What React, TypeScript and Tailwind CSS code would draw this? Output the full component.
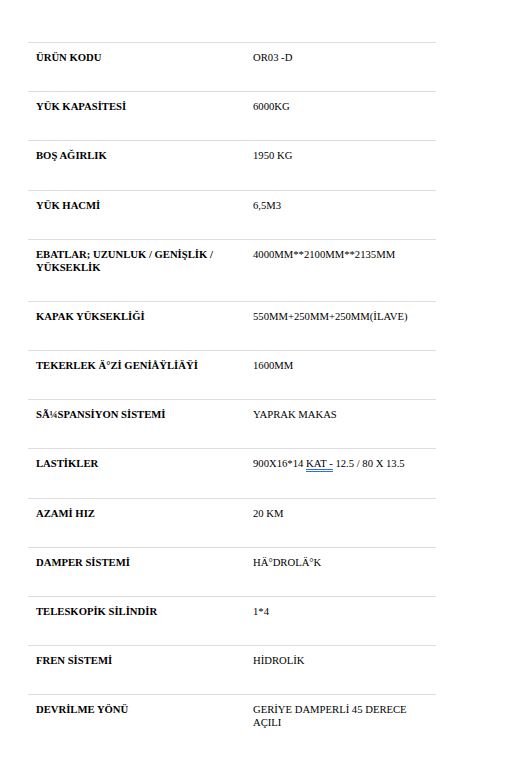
import React from "react";

type Row = { label: string; value: React.ReactNode };

const ROWS: Row[] = [
  { label: "ÜRÜN KODU", value: "OR03 -D" },
  { label: "YÜK KAPASİTESİ", value: "6000KG" },
  { label: "BOŞ AĞIRLIK", value: "1950 KG" },
  { label: "YÜK HACMİ", value: "6,5M3" },
  { label: "EBATLAR; UZUNLUK / GENİŞLİK / YÜKSEKLİK", value: "4000MM**2100MM**2135MM" },
  { label: "KAPAK YÜKSEKLİĞİ", value: "550MM+250MM+250MM(İLAVE)" },
  { label: "TEKERLEK Ä°Zİ GENİÅŸLİÄŸİ", value: "1600MM" },
  { label: "SÃ¼SPANSİYON SİSTEMİ", value: "YAPRAK MAKAS" },
  {
    label: "LASTİKLER",
    value: (
      <>
        900X16*14{" "}
        <span className="border-b-[3px] border-double border-[#2f6fe0]">KAT -</span>{" "}
        12.5 / 80 X 13.5
      </>
    ),
  },
  { label: "AZAMİ HIZ", value: "20 KM" },
  { label: "DAMPER SİSTEMİ", value: "HÄ°DROLÄ°K" },
  { label: "TELESKOPİK SİLİNDİR", value: "1*4" },
  { label: "FREN SİSTEMİ", value: "HİDROLİK" },
  { label: "DEVRİLME YÖNÜ", value: "GERİYE DAMPERLİ 45 DERECE AÇILI" },
];

export default function App() {
  return (
    <div className="min-h-[760px] bg-white pt-[42px] font-['Liberation_Serif',serif] text-[10.67px] leading-[12.7px] text-black">
      <div className="ml-[28px] w-[408px]">
        {ROWS.map((row, i) => (
          <div key={i} className="flex border-t border-[#dedede] pt-[8px] pb-[27.5px]">
            <div className="w-[217px] shrink-0 pl-[8px] pr-[8px] font-bold">{row.label}</div>
            <div className="flex-1 pl-[8px] pr-[8px]">{row.value}</div>
          </div>
        ))}
      </div>
    </div>
  );
}
